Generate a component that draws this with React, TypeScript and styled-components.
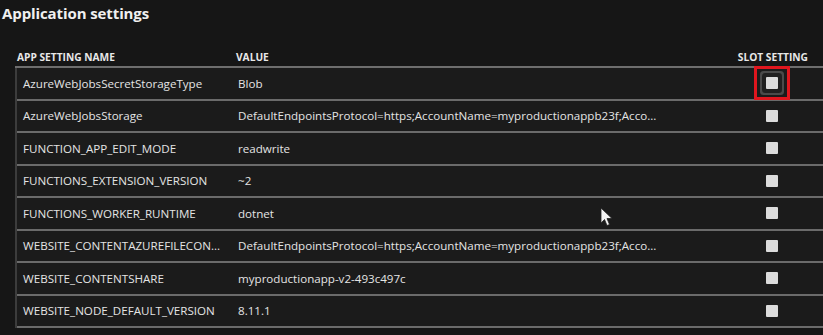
import React from 'react';
import styled, { createGlobalStyle } from 'styled-components';

const GlobalStyle = createGlobalStyle`
  html, body {
    margin: 0;
    padding: 0;
    background: #161616;
  }
  body {
    font-family: "Open Sans", "Noto Sans", Arial, sans-serif;
    color: #e6e6e6;
  }
`;

const Page = styled.div`
  position: relative;
  width: 823px;
  height: 335px;
  overflow: hidden;
  background: #161616;
`;

const Title = styled.h2`
  margin: 0;
  padding: 3px 0 0 2px;
  font-size: 15px;
  font-weight: 700;
  color: #f0f0f0;
  letter-spacing: -0.1px;
`;

const Table = styled.div`
  margin: 24px 0 0 15px;
`;

const HeaderRow = styled.div`
  display: grid;
  grid-template-columns: 221px 1fr 100px;
  align-items: end;
  height: 19px;
  font-size: 10.2px;
  font-weight: 700;
  color: #e8e8e8;
  border-bottom: 2px solid #6e6e6e;
`;

const HeadCell = styled.div<{ $right?: boolean; $pad?: number }>`
  padding-left: ${(p) => p.$pad ?? 0}px;
  padding-right: ${(p) => (p.$right ? 15 : 0)}px;
  padding-bottom: 2px;
  text-align: ${(p) => (p.$right ? 'right' : 'left')};
  white-space: nowrap;
`;

const Body = styled.div`
  border-left: 2px solid #3c3c3c;
`;

const Row = styled.div`
  display: grid;
  grid-template-columns: 221px 1fr 100px;
  align-items: center;
  height: 30.5px;
  background: #1b1b1b;
  border-bottom: 2px solid #6b6b6b;
  font-size: 11.6px;
  color: #e4e4e4;
`;

const Cell = styled.div<{ $pad: number }>`
  padding-left: ${(p) => p.$pad}px;
  white-space: nowrap;
  overflow: hidden;
`;

const CheckCell = styled.div`
  display: flex;
  justify-content: center;
  padding-right: 2px;
`;

const Check = styled.span<{ $highlight?: boolean }>`
  position: relative;
  display: block;
  width: 12px;
  height: 12px;
  background: #dcdcdc;
  border-radius: 1px;
  box-shadow: ${(p) => (p.$highlight ? '0 0 0 4px #202020, 0 0 0 6px #4a4a4a' : 'none')};

  &::after {
    content: '';
    display: ${(p) => (p.$highlight ? 'block' : 'none')};
    position: absolute;
    left: -12px;
    top: -11px;
    width: 30px;
    height: 28px;
    border: 3px solid #e0161e;
  }
`;

const Cursor = styled.svg`
  position: absolute;
  left: 600px;
  top: 207px;
`;

const rows: [string, string][] = [
  ['AzureWebJobsSecretStorageType', 'Blob'],
  ['AzureWebJobsStorage', 'DefaultEndpointsProtocol=https;AccountName=myproductionappb23f;Acco...'],
  ['FUNCTION_APP_EDIT_MODE', 'readwrite'],
  ['FUNCTIONS_EXTENSION_VERSION', '~2'],
  ['FUNCTIONS_WORKER_RUNTIME', 'dotnet'],
  ['WEBSITE_CONTENTAZUREFILECON...', 'DefaultEndpointsProtocol=https;AccountName=myproductionappb23f;Acco...'],
  ['WEBSITE_CONTENTSHARE', 'myproductionapp-v2-493c497c'],
  ['WEBSITE_NODE_DEFAULT_VERSION', '8.11.1'],
];

export default function App() {
  return (
    <Page>
      <GlobalStyle />
      <Title>Application settings</Title>
      <Table>
        <HeaderRow>
          <HeadCell $pad={2}>APP SETTING NAME</HeadCell>
          <HeadCell>VALUE</HeadCell>
          <HeadCell $right>SLOT SETTING</HeadCell>
        </HeaderRow>
        <Body>
          {rows.map(([name, value], i) => (
            <Row key={name}>
              <Cell $pad={6}>{name}</Cell>
              <Cell $pad={0}>{value}</Cell>
              <CheckCell>
                <Check $highlight={i === 0} />
              </CheckCell>
            </Row>
          ))}
        </Body>
      </Table>
      <Cursor width="14" height="20" viewBox="0 0 14 20">
        <path d="M1 1 L1 16 L4.5 12.5 L7 18.5 L9.5 17.5 L7 11.5 L12 11.5 Z" fill="#f4f4f4" stroke="#222" strokeWidth="0.8" />
      </Cursor>
    </Page>
  );
}
